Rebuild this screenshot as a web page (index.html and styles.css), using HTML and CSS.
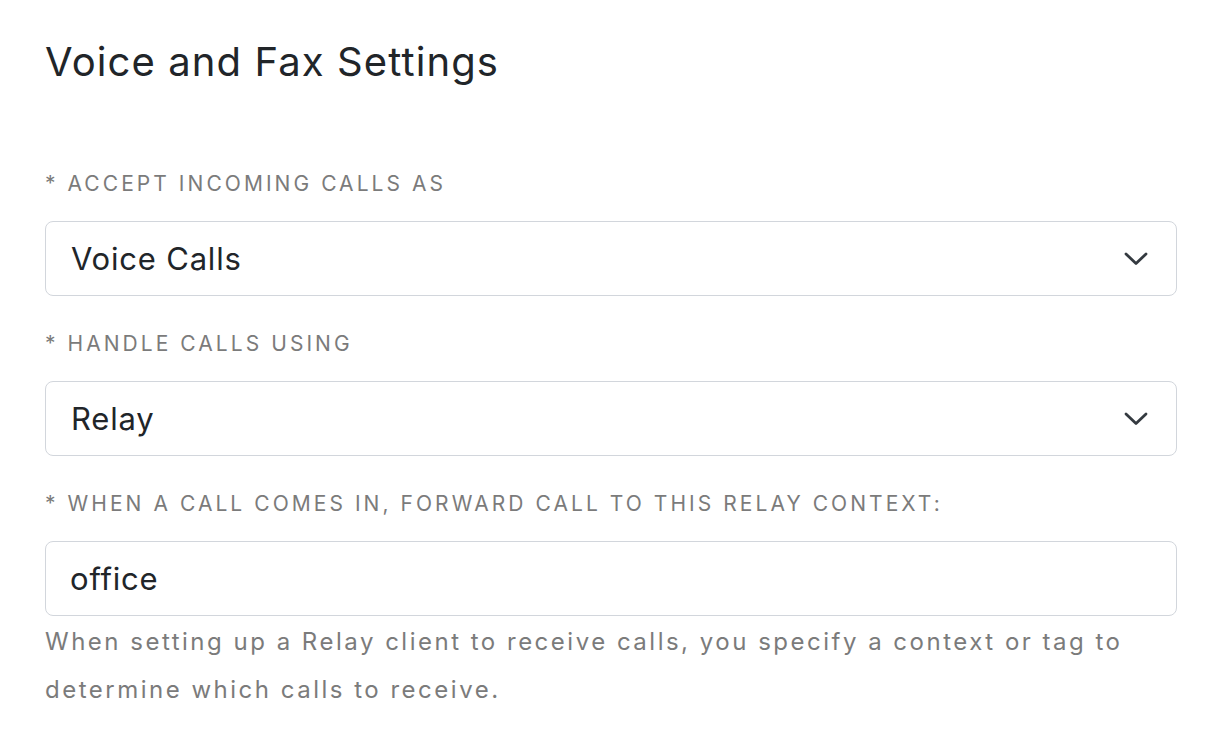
FILE: index.html
```html
<!DOCTYPE html>
<html lang="en">
<head>
<meta charset="utf-8">
<title>Voice and Fax Settings</title>
<link rel="stylesheet" href="styles.css">
</head>
<body>
<main class="page">
  <h1 class="title">Voice and Fax Settings</h1>

  <div class="field field-first">
    <label class="label">* ACCEPT INCOMING CALLS AS</label>
    <div class="select">
      <span class="value">Voice Calls</span>
      <svg class="chevron" width="24" height="14" viewBox="0 0 24 14"><path d="M2 2 L12 11.5 L22 2" fill="none" stroke="#343a40" stroke-width="2.8" stroke-linecap="round" stroke-linejoin="round"/></svg>
    </div>
  </div>

  <div class="field">
    <label class="label">* HANDLE CALLS USING</label>
    <div class="select">
      <span class="value">Relay</span>
      <svg class="chevron" width="24" height="14" viewBox="0 0 24 14"><path d="M2 2 L12 11.5 L22 2" fill="none" stroke="#343a40" stroke-width="2.8" stroke-linecap="round" stroke-linejoin="round"/></svg>
    </div>
  </div>

  <div class="field">
    <label class="label">* WHEN A CALL COMES IN, FORWARD CALL TO THIS RELAY CONTEXT:</label>
    <div class="input">
      <span class="value value-input">office</span>
    </div>
    <p class="help">When setting up a Relay client to receive calls, you specify a context or tag to determine which calls to receive.</p>
  </div>
</main>
</body>
</html>
```

FILE: styles.css
```css
html, body {
  margin: 0;
  padding: 0;
  background: #ffffff;
}

body {
  font-family: "Inter", "Open Sans", sans-serif;
  color: #212529;
}

.page {
  padding: 0 43px 0 45px;
}

.title {
  margin: 38px 0 0 0;
  font-size: 40px;
  line-height: 48px;
  font-weight: 400;
  letter-spacing: 1.1px;
  color: #212529;
}

.field {
  margin-top: 36px;
}

.field-first {
  margin-top: 86px;
}

.label {
  display: block;
  font-size: 21px;
  line-height: 24px;
  letter-spacing: 3.05px;
  color: #7b7b7b;
  margin-bottom: 25px;
}

.select,
.input {
  box-sizing: border-box;
  height: 75px;
  border: 1.5px solid #d2d6dc;
  border-radius: 8px;
  display: flex;
  align-items: center;
  justify-content: space-between;
  padding: 0 28px 0 25px;
}

.input {
  padding-left: 24px;
}

.value {
  font-size: 31px;
  letter-spacing: 0.8px;
  color: #212529;
}

.chevron {
  display: block;
}

.help {
  margin: 2px 0 0 0;
  font-size: 24px;
  line-height: 48px;
  letter-spacing: 2.5px;
  color: #7b7b7b;
}
```
